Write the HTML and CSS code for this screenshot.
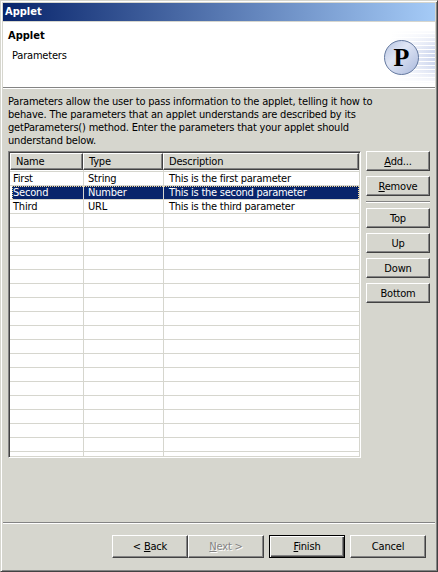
FILE: index.html
```html
<!DOCTYPE html>
<html lang="en">
<head>
<meta charset="utf-8">
<title>Applet</title>
<link rel="stylesheet" href="styles.css">
</head>
<body>
<div class="window">
  <div class="titlebar">Applet</div>
  <header class="banner">
    <div class="banner-text">
      <h1>Applet</h1>
      <p>Parameters</p>
    </div>
    <svg class="logo" width="56" height="64" viewBox="0 0 56 64">
      <defs>
        <linearGradient id="fade" x1="0" x2="1"><stop offset="0" stop-color="#fff"/><stop offset=".6" stop-color="#e4e9f6"/><stop offset="1" stop-color="#ced7ef"/></linearGradient>
        <linearGradient id="soft" x1="0" x2="0" y1="0" y2="1"><stop offset="0" stop-color="#fff" stop-opacity=".9"/><stop offset=".4" stop-color="#fff" stop-opacity="0"/><stop offset=".65" stop-color="#fff" stop-opacity="0"/><stop offset="1" stop-color="#fff" stop-opacity=".9"/></linearGradient>
        <linearGradient id="ball" x1="0" y1="0" x2="1" y2="1"><stop offset="0" stop-color="#b4c2e0"/><stop offset=".4" stop-color="#e0e6f5"/><stop offset="1" stop-color="#a9b8dc"/></linearGradient>
        <pattern id="lines" width="4" height="4" patternUnits="userSpaceOnUse"><rect y="3" width="4" height="1" fill="#fff"/></pattern>
      </defs>
      <rect x="12" y="9" width="44" height="52" fill="url(#fade)"/>
      <rect x="12" y="9" width="44" height="52" fill="url(#lines)"/>
      <rect x="12" y="9" width="44" height="52" fill="url(#soft)"/>
      <circle cx="22.5" cy="35.5" r="17" fill="url(#ball)" stroke="#64799f"/>
      <text class="letter" x="14.5" y="44">P</text>
    </svg>
  </header>
  <main class="page">
    <div class="intro">
      <div>Parameters allow the user to pass information to the applet, telling it how to</div>
      <div>behave. The parameters that an applet understands are described by its</div>
      <div>getParameters() method. Enter the parameters that your applet should</div>
      <div>understand below.</div>
    </div>
    <div class="work">
      <div class="table">
        <div class="thead"><div>Name</div><div>Type</div><div>Description</div></div>
        <div class="tbody">
          <div class="row"><span>First</span><span>String</span><span>This is the first parameter</span></div>
          <div class="row selected"><span>Second</span><span>Number</span><span>This is the second parameter</span></div>
          <div class="row"><span>Third</span><span>URL</span><span>This is the third parameter</span></div>
        </div>
      </div>
      <div class="side">
        <div class="btn"><span><u>A</u>dd...</span></div>
        <div class="btn"><span><u>R</u>emove</span></div>
        <div class="rule"></div>
        <div class="btn">Top</div>
        <div class="btn">Up</div>
        <div class="btn">Down</div>
        <div class="btn">Bottom</div>
      </div>
    </div>
  </main>
  <footer class="footer">
    <div class="btn"><span>&lt; <u>B</u>ack</span></div>
    <div class="btn disabled"><span><u>N</u>ext &gt;</span></div>
    <div class="btn default"><span><u>F</u>inish</span></div>
    <div class="btn">Cancel</div>
  </footer>
</div>
</body>
</html>
```
FILE: styles.css
```css
* { box-sizing: border-box; }
body { margin: 0; background: #d6d6ce; }
.window {
  width: 438px; height: 572px; padding: 1px;
  display: flex; flex-direction: column;
  background: #d6d6ce;
  border: 1px solid; border-color: #d6d6ce #424242 #424242 #d6d6ce;
  box-shadow: inset 1px 1px #fff, inset -1px -1px #848484;
  font: 11px/13px "DejaVu Sans Condensed", "DejaVu Sans", sans-serif;
  font-stretch: condensed;
  letter-spacing: -0.19px;
  color: #000;
}
.titlebar {
  height: 18px; margin: 1px 1px 0; padding-left: 2px;
  background: linear-gradient(90deg, #08246b, #a5cbf7);
  color: #fff; font-weight: bold; line-height: 18px; letter-spacing: 0;
}
.banner {
  height: 65px; margin: 1px 1px 0; background: #fff;
  display: flex; justify-content: space-between;
}
.banner-text { padding: 7px 0 0 5px; }
h1 { margin: 0; font-size: 11px; line-height: 13px; letter-spacing: 0; }
.banner p { margin: 7px 0 0 4px; }
.logo { display: block; }
.letter { font: bold 26px "Liberation Serif", serif; }
.page {
  height: 435px; margin: 0 1px; padding: 7px 5px 0;
  border-top: 1px solid #848484; box-shadow: inset 0 1px #fff;
}
.intro { height: 56px; white-space: nowrap; }
.work { display: flex; gap: 5px; }
.table {
  width: 353px; height: 307px; display: flex; flex-direction: column;
  border: 1px solid; border-color: #848484 #fff #fff #848484;
  box-shadow: inset 1px 1px #424242, inset -1px -1px #d6d6ce;
  padding: 1px;
}
.thead { display: grid; grid-template-columns: 73px 80px 196px; height: 17px; }
.thead div {
  background: #d6d6ce; padding-left: 5px; line-height: 15px;
  border: 1px solid; border-color: #fff #424242 #424242 #fff;
  box-shadow: inset -1px -1px #848484;
}
.tbody {
  flex: 1; padding-top: 2px;
  background:
    linear-gradient(#d6d6ce, #d6d6ce) 73px 0 / 1px 100% no-repeat,
    linear-gradient(#d6d6ce, #d6d6ce) 153px 0 / 1px 100% no-repeat,
    repeating-linear-gradient(#fff 0 1px, #d6d6ce 1px 2px, #fff 2px 15px) 0 0 / 100% 14px,
    #fff;
}
.row {
  display: grid; grid-template-columns: 71px 79px 195px; column-gap: 1px;
  height: 13px; margin: 0 0 1px 2px; line-height: 13px; white-space: nowrap;
}
.row span { padding-left: 1px; }
.row span + span { padding-left: 4px; }
.row span:last-child { padding-left: 5px; letter-spacing: -0.25px; }
.selected span {
  color: #fff;
  background:
    repeating-linear-gradient(90deg, #f7db94 0 1px, #08246b 1px 2px) 0 0 / 100% 1px no-repeat,
    #08246b;
}
.selected span:first-child {
  background:
    repeating-linear-gradient(90deg, #f7db94 0 1px, #08246b 1px 2px) 0 0 / 100% 1px no-repeat,
    repeating-linear-gradient(#f7db94 0 1px, #08246b 1px 2px) 0 0 / 1px 100% no-repeat,
    #08246b;
}
.selected span:last-child {
  background:
    repeating-linear-gradient(90deg, #f7db94 0 1px, #08246b 1px 2px) 0 0 / 100% 1px no-repeat,
    repeating-linear-gradient(#f7db94 0 1px, #08246b 1px 2px) 100% 0 / 1px 100% no-repeat,
    #08246b;
}
.side { width: 64px; display: flex; flex-direction: column; gap: 5px; }
.btn {
  height: 20px; display: flex; align-items: center; justify-content: center;
  border: 1px solid; border-color: #fff #424242 #424242 #fff;
  box-shadow: inset -1px -1px #848484; background: #d6d6ce;
  white-space: nowrap;
}
u { text-underline-offset: 1px; }
.rule { height: 2px; background: #fff; border-top: 1px solid #848484; }
.footer {
  height: 48px; margin: 0 1px; padding: 12px 9px 0 0;
  border-top: 1px solid #848484; box-shadow: inset 0 1px #fff;
  display: flex; justify-content: flex-end; align-items: flex-start;
}
.footer .btn { width: 76px; height: 23px; padding-bottom: 1px; }
.disabled { color: #848484; text-shadow: 1px 1px #fff; }
.footer .default {
  margin: 0 5px; border-color: #000;
  box-shadow: inset 1px 1px #fff, inset -1px -1px #424242, inset -2px -2px #848484;
}
```
